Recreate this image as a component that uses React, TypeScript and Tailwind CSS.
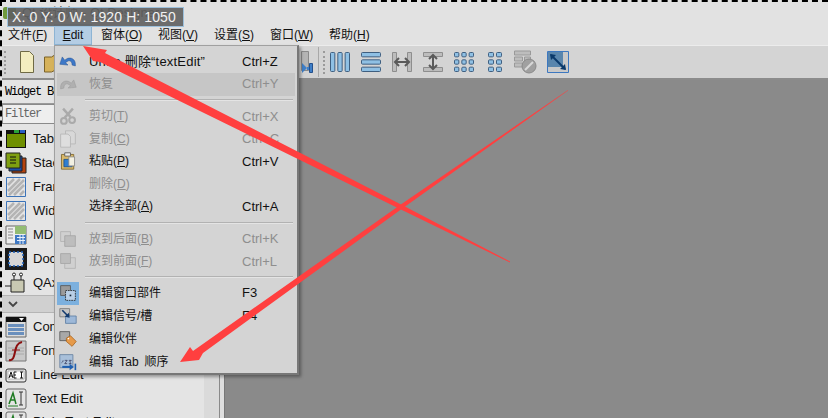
import type { ReactNode } from "react";

const sans = "font-['Liberation_Sans','Noto_Sans_CJK_SC',sans-serif]";
const mono = "font-['Liberation_Mono',monospace] tracking-[-1.2px]";

// --- small icon drawings ---
function Svg({ size = 22, children }: { size?: number; children: ReactNode }) {
  return (
    <svg width={size} height={size} viewBox="0 0 22 22" className="shrink-0">
      {children}
    </svg>
  );
}

const Stripes = () => (
  <g stroke="#b4b4b4" strokeWidth="2.5">
    <path d="M3 9 9 3M3 15 15 3M4 19 19 4M9 19 19 9M15 19l4-4" />
  </g>
);

const sideIcons: Record<string, ReactNode> = {
  tab: (
    <Svg>
      <path d="M1 2h20v18H1z" fill="#111" />
      <path d="M2 6h18v13H2z" fill="#6f8f00" />
      <path d="M9 2h5v3H9z" fill="#2aa13a" />
      <path d="M15 2h5v3h-5z" fill="#2a5fc4" />
    </Svg>
  ),
  stack: (
    <Svg>
      <path d="M7 6h14v15H7z" fill="#b5430f" stroke="#222" />
      <path d="M4 4h13v15H4z" fill="#1d4fa8" stroke="#222" />
      <path d="M1 1h14v15H1z" fill="#7f9f10" stroke="#222" />
      <path d="M5 5h6M5 8h6M5 11h6" stroke="#111" />
    </Svg>
  ),
  frame: (
    <Svg>
      <path d="M1.5 1.5h19v19h-19z" fill="#e4e4e4" stroke="#3b73b8" />
      <Stripes />
    </Svg>
  ),
  mdi: (
    <Svg>
      <path d="M1 2h20v18H1z" fill="#eee" stroke="#666" />
      <path d="M10 2h11v8H10z" fill="#93bc73" />
      <path d="M10 11h11v9H10z" fill="#3f79c4" />
      <path d="M3 5h5M3 8h5M3 11h5M3 14h5" stroke="#888" />
      <path d="M12 13.500h8M12 16.500h8M15 11v9M18 11v9" stroke="#e8f0fa" />
    </Svg>
  ),
  dock: (
    <Svg>
      <path d="M0 0h22v22H0z" fill="#1a1a1a" />
      <path d="M4 4h14v14H4z" fill="#d6d6d6" />
      <path d="M4 4h14v14H4z" fill="none" stroke="#1d5fb8" strokeWidth="1.500" strokeDasharray="2 2" />
    </Svg>
  ),
  qax: (
    <Svg>
      <path d="M6 8h13v12H6z" fill="#c9c9b2" stroke="#222" />
      <path d="M0 14h6M9 8V3M16 8V3" stroke="#222" />
      <circle cx="9" cy="2.500" r="1.500" fill="#fff" stroke="#222" />
      <circle cx="16" cy="2.500" r="1.500" fill="#fff" stroke="#222" />
    </Svg>
  ),
  combo: (
    <Svg>
      <path d="M1 1h20v20H1z" fill="#dcdcdc" stroke="#666" />
      <path d="M1 1h20v5H1z" fill="#111" />
      <path d="m14 2 5 0-2.500 3z" fill="#fff" />
      <path d="M3 8h16v3H3zM3 12h16v3H3zM3 16h16v3H3z" fill="#6a8fbd" />
    </Svg>
  ),
  font: (
    <Svg>
      <path d="M1 1h20v20H1z" fill="#c9c9c9" stroke="#777" />
      <path d="M3 8h16M3 11h16M3 14h16" stroke="#aaa" />
      <path d="M4 20c4 1 5-3 6-8s2-9 7-10" fill="none" stroke="#8c0f0f" strokeWidth="2" />
      <path d="M7 10h8" stroke="#8c0f0f" />
    </Svg>
  ),
  line: (
    <Svg>
      <rect x="1" y="5" width="20" height="13" rx="2" fill="#e8e8e8" stroke="#333" />
      <path d="M3 7h16v8H3z" fill="#fff" stroke="#777" strokeWidth=".5" />
      <path d="M4 14l2-6 2 6M5 12h2M9 8v6h2.500M9 11h2M9 8h2.500M15 8h3M15 14h3M16.500 8v6" fill="none" stroke="#111" />
    </Svg>
  ),
  text: (
    <Svg>
      <rect x="1" y="1" width="20" height="20" rx="2" fill="#e4e4e4" stroke="#666" />
      <path d="M4 16 8 5l3 11M5.500 12h4" fill="none" stroke="#1e7a22" strokeWidth="1.500" />
      <path d="M3 18h10" stroke="#1e7a22" />
      <path d="M14 4h4M14 17h4M16 4v13" stroke="#333" />
    </Svg>
  ),
};

const menuIcons: Record<string, ReactNode> = {
  undo: (
    <Svg size={18}>
      <path d="M20 15c0-6-5-9-10-7L7 10 4 6l-3 9 10 1-3-3 3-2c3-1 5 1 5 5l4 1z" fill="#3d78c8" stroke="#26508f" strokeWidth=".6" />
    </Svg>
  ),
  redo: (
    <Svg size={18}>
      <path d="M2 15c0-6 5-9 10-7l3 2 3-4 3 9-10 1 3-3-3-2c-3-1-5 1-5 5l-4 1z" fill="#b0b0b0" stroke="#999" strokeWidth=".6" />
    </Svg>
  ),
  cut: (
    <Svg size={18}>
      <path d="M5 2l9 10M17 2 7 13" stroke="#aaa" strokeWidth="3" />
      <circle cx="6" cy="17" r="3.500" fill="none" stroke="#aaa" strokeWidth="2.500" />
      <circle cx="16" cy="16" r="3.500" fill="none" stroke="#aaa" strokeWidth="2.500" />
    </Svg>
  ),
  copy: (
    <Svg size={18}>
      <path d="M8 1h9l3 3v13H8z" fill="#d8d8d8" stroke="#b4b4b4" />
      <path d="M2 5h9l3 3v13H2z" fill="#dedede" stroke="#b4b4b4" />
    </Svg>
  ),
  paste: (
    <Svg size={18}>
      <path d="M3 3h15v18H3z" fill="#d9b96a" stroke="#7d6428" />
      <path d="M7 1h7v4H7z" fill="#eee" stroke="#555" />
      <path d="M6 9h10v9H6z" fill="#2f7ed0" stroke="#1b4e8c" />
      <path d="M12 6h7v11h-7z" fill="#f2f0e2" stroke="#888" />
    </Svg>
  ),
  back: (
    <Svg size={18}>
      <path d="M2 2h12v12H2z" fill="#d0d0d0" stroke="#b0b0b0" />
      <path d="M7 7h13v13H7z" fill="#bdbdbd" stroke="#a4a4a4" />
    </Svg>
  ),
  front: (
    <Svg size={18}>
      <path d="M7 7h13v13H7z" fill="#d0d0d0" stroke="#b0b0b0" />
      <path d="M2 2h12v12H2z" fill="#bdbdbd" stroke="#a4a4a4" />
    </Svg>
  ),
  widget: (
    <Svg size={18}>
      <path d="M2 2h12v12H2z" fill="#9a9a9a" stroke="#555" />
      <path d="M8 8h12v12H8z" fill="#b9cfe6" stroke="#222" strokeDasharray="2 1" />
      <path d="M13 13h2v2h-2z" fill="#123" />
    </Svg>
  ),
  signal: (
    <Svg size={18}>
      <path d="M1 2h12v10H1z" fill="#c4c4c4" stroke="#777" />
      <path d="M8 11h13v9H8z" fill="#9db8d8" stroke="#5c7da3" />
      <path d="M4 4l7 7" stroke="#123a6e" strokeWidth="2" />
      <path d="m13 13-6-1 5-5z" fill="#123a6e" />
    </Svg>
  ),
  buddy: (
    <Svg size={18}>
      <path d="M1 2h12v11H1z" fill="#a8a8a8" stroke="#555" />
      <path d="m9 10 5-3 7 7-5 6-7-6z" fill="#e69a4a" stroke="#a8641f" />
      <circle cx="11.500" cy="10.500" r="1" fill="#fff" />
    </Svg>
  ),
  order: (
    <Svg size={18}>
      <path d="M1 2h16v16H1z" fill="#a9c0da" stroke="#64809f" />
      <path d="M3 12c1-1 2-1 2-3M7 9h3l-3 4h3M12 9h3l-2 2 2 2h-3" fill="none" stroke="#224" strokeWidth=".8" />
      <path d="M4 17h10" stroke="#1f5fb0" strokeWidth="2.500" />
      <path d="m13 13 5 4-5 4z" fill="#1f5fb0" />
      <path d="M20 13v8" stroke="#1f5fb0" strokeWidth="2" />
    </Svg>
  ),
};

const Bars = ({ rows, cols, w, h }: { rows: number; cols: number; w: number; h: number }) => (
  <svg width={w} height={h} viewBox={`0 0 ${w} ${h}`} className="shrink-0">
    {Array.from({ length: rows * cols }).map((_, i) => {
      const cw = (w - (cols - 1) * 2) / cols;
      const ch = (h - (rows - 1) * 2) / rows;
      return (
        <rect
          key={i}
          x={(i % cols) * (cw + 2) + 0.5}
          y={Math.floor(i / cols) * (ch + 2) + 0.5}
          width={cw - 1}
          height={ch - 1}
          rx="1"
          fill="#8fc0e4"
          stroke="#3f5f80"
        />
      );
    })}
  </svg>
);

function Mnemonic({ text, letter }: { text: string; letter: string }) {
  return (
    <>
      {text}(<span className="underline">{letter}</span>)
    </>
  );
}

type Row =
  | { sep: true; h: string }
  | { icon?: string; text: string; key?: string; shortcut?: string; off?: boolean; hover?: boolean; active?: boolean; h: string; cls?: string };

const menuRows: Row[] = [
  { icon: "undo", text: "Undo 删除“textEdit”", shortcut: "Ctrl+Z", h: "h-[22.5px]", cls: "text-[13px] tracking-[0.2px]" },
  { icon: "redo", text: "恢复", shortcut: "Ctrl+Y", off: true, hover: true, h: "h-[23px]" },
  { sep: true, h: "h-[9.5px]" },
  { icon: "cut", text: "剪切", key: "T", shortcut: "Ctrl+X", off: true, h: "h-[22.5px]" },
  { icon: "copy", text: "复制", key: "C", shortcut: "Ctrl+C", off: true, h: "h-[22.5px]" },
  { icon: "paste", text: "粘贴", key: "P", shortcut: "Ctrl+V", h: "h-[22.5px]" },
  { text: "删除", key: "D", off: true, h: "h-[22.5px]" },
  { text: "选择全部", key: "A", shortcut: "Ctrl+A", h: "h-[22.5px]" },
  { sep: true, h: "h-[10px]" },
  { icon: "back", text: "放到后面", key: "B", shortcut: "Ctrl+K", off: true, h: "h-[22.5px]" },
  { icon: "front", text: "放到前面", key: "F", shortcut: "Ctrl+L", off: true, h: "h-[22.5px]" },
  { sep: true, h: "h-[9px]" },
  { icon: "widget", text: "编辑窗口部件", shortcut: "F3", active: true, h: "h-[23px]" },
  { icon: "signal", text: "编辑信号/槽", shortcut: "F4", h: "h-[23px]" },
  { icon: "buddy", text: "编辑伙伴", h: "h-[23px]" },
  { icon: "order", text: "编辑 Tab 顺序", h: "h-[23px]", cls: "[word-spacing:2px] tracking-[0.2px]" },
];

const topWidgets = [
  { icon: sideIcons.tab, label: "Tab", h: "h-[23px]" },
  { icon: sideIcons.stack, label: "Stac", h: "h-[25px]" },
  { icon: sideIcons.frame, label: "Fram", h: "h-[24px]" },
  { icon: sideIcons.frame, label: "Wid", h: "h-[24px]" },
  { icon: sideIcons.mdi, label: "MDI", h: "h-[24px]" },
  { icon: sideIcons.dock, label: "Doc", h: "h-[24px]" },
  { icon: sideIcons.qax, label: "QAx", h: "h-[24px]" },
];

const inputWidgets = [
  { icon: sideIcons.combo, label: "Combo Box", h: "h-[24px]" },
  { icon: sideIcons.font, label: "Font Combo Box", h: "h-[24px]" },
  { icon: sideIcons.line, label: "Line Edit", h: "h-[24px]" },
  { icon: sideIcons.text, label: "Text Edit", h: "h-[23px]" },
  { icon: sideIcons.text, label: "Plain Text Edit", h: "h-[24px]" },
];

const MENU_LABELS = [
  { node: <Mnemonic text="文件" letter="F" />, cls: "w-[46px] ml-[6px]" },
  {
    node: (
      <>
        <span className="underline">E</span>dit
      </>
    ),
    cls: "w-[38px] h-[21px] justify-center bg-[#b4cde4] border border-[#8db4d4]",
  },
  { node: <Mnemonic text="窗体" letter="O" />, cls: "w-[57px] ml-[9px]" },
  { node: <Mnemonic text="视图" letter="V" />, cls: "w-[56px]" },
  { node: <Mnemonic text="设置" letter="S" />, cls: "w-[56px]" },
  { node: <Mnemonic text="窗口" letter="W" />, cls: "w-[59px]" },
  { node: <Mnemonic text="帮助" letter="H" />, cls: "w-[50px]" },
];

function ToolbarGrip() {
  return <div className="w-[2px] h-[23px] shrink-0 border-l-2 border-dotted border-[#9a9a9a]" />;
}

export default function App() {
  return (
    <div className={`relative w-[828px] h-[418px] overflow-hidden bg-white text-[12px] text-[#111] ${sans}`}>
      <div className="relative flex flex-col h-full border-t-2 border-l-2 border-dashed border-black bg-[#e2e2e2]">
        {/* title bar */}
        <div className="h-[22px] shrink-0 flex items-center pl-[1px] gap-[6px]">
          <div className="w-[13px] h-[12px] rounded-[2px] bg-[#6f9a3c]" />
          <span className="text-[13px] text-[#333]">Qt 设计师 - Qt Designer</span>
        </div>

        {/* menu bar */}
        <div className="h-[21px] shrink-0 flex items-center">
          {MENU_LABELS.map((m, i) => (
            <div key={i} className={`flex items-center shrink-0 ${m.cls}`}>
              {m.node}
            </div>
          ))}
        </div>

        {/* toolbar */}
        <div className="h-[35px] shrink-0 flex items-center bg-[#d4d4d4] border-t border-[#ececec] border-b-2 border-b-[#8c8c8c]">
          <div className="ml-[2px] w-[16px] shrink-0">
            <ToolbarGrip />
          </div>
          <svg width="14" height="23" viewBox="0 0 14 23" className="shrink-0">
            <path d="M.5.500h9l4 4v17H.5z" fill="#f3edbf" stroke="#6f6a45" />
          </svg>
          <svg width="16" height="22" viewBox="0 0 16 22" className="ml-[10px] shrink-0">
            <path d="M.5 6h7l8-5v16l-8 4H.5z" fill="#d6b25a" stroke="#7b6228" />
          </svg>
          <svg width="12" height="23" viewBox="0 0 12 23" className="ml-[241px] shrink-0">
            <path d="M.5.500h7v19h-7z" fill="#b4b4b4" stroke="#8a8a8a" />
            <path d="M1 12l5 5-5 5z" fill="#3f7fc8" />
            <path d="M6 16h2v3H6z" fill="#3f7fc8" />
            <path d="M8.500 12.500h3v9h-3z" fill="#3f7fc8" stroke="#24508c" />
          </svg>
          <div className="ml-[5px] w-[1px] h-[30px] bg-[#a8a8a8] shrink-0" />
          <div className="ml-[4px] shrink-0">
            <ToolbarGrip />
          </div>
          <div className="ml-[5px] flex items-center gap-[11px]">
            <Bars rows={1} cols={3} w={20} h={20} />
            <Bars rows={3} cols={1} w={20} h={20} />
            <svg width="20" height="20" viewBox="0 0 20 20" className="shrink-0">
              <path d="M.5.500h4v19h-4zM15.500.500h4v19h-4z" fill="#bdbdbd" stroke="#8e8e8e" />
              <path d="M3 10h14M7 6l-4 4 4 4M13 6l4 4-4 4" fill="none" stroke="#5a5a5a" strokeWidth="2" />
            </svg>
            <svg width="20" height="20" viewBox="0 0 20 20" className="shrink-0">
              <path d="M.5.500h19v4H.5zM.5 15.500h19v4H.5z" fill="#bdbdbd" stroke="#8e8e8e" />
              <path d="M10 3v14M6 7l4-4 4 4M6 13l4 4 4-4" fill="none" stroke="#5a5a5a" strokeWidth="2" />
            </svg>
            <Bars rows={3} cols={3} w={20} h={20} />
          </div>
          <div className="ml-[14px] shrink-0">
            <Bars rows={3} cols={2} w={14} h={20} />
          </div>
          <svg width="23" height="24" viewBox="0 0 23 24" className="ml-[12px] shrink-0">
            <path d="M.5 1h16v4H.5zM.5 7h8v4h-8zM10.500 7h6v4h-6zM.5 13h8v4h-8z" fill="#bdbdbd" stroke="#999" />
            <circle cx="15" cy="16" r="7" fill="#a0a0a0" stroke="#8a8a8a" />
            <path d="m11 20 8-8" stroke="#d8d8d8" strokeWidth="2" />
          </svg>
          <svg width="22" height="22" viewBox="0 0 22 22" className="ml-[10px] shrink-0">
            <path d="M.5.500h21v21H.5z" fill="#c9c9c9" stroke="#3d78c0" />
            <path d="M1 1h15v15H1z" fill="#5a86ad" />
            <path d="M4 4l14 14" stroke="#0b3a6b" strokeWidth="2" />
            <path d="m3 3 6 1-5 5zM19 19l-6-1 5-5z" fill="#0b3a6b" />
          </svg>
        </div>

        {/* body */}
        <div className="flex flex-1 min-h-0">
          <div className="w-[202px] shrink-0 bg-[#e4e4e4] overflow-hidden">
            <div className={`h-[24px] flex items-center pl-[3px] text-[12px] text-black border-b border-[#9a9a9a] ${mono}`}>
              Widget Box
            </div>
            <div className="h-[23px] flex items-start">
              <div className={`w-[80px] h-[20px] flex items-center pl-[2px] bg-[#eeeeee] border border-[#8a8a8a] text-[#666] ${mono}`}>
                Filter
              </div>
            </div>
            {topWidgets.map((w) => (
              <div key={w.label} className={`flex items-center pl-[3px] gap-[6px] text-[13px] ${w.h}`}>
                {w.icon}
                <span>{w.label}</span>
              </div>
            ))}
            <div className="h-[18px] flex items-center pl-[6px] bg-[#d0d0d0] border-y border-[#b5b5b5]">
              <svg width="10" height="8" viewBox="0 0 10 8">
                <path d="m1 2 4 4 4-4" fill="none" stroke="#444" strokeWidth="1.800" />
              </svg>
            </div>
            <div className="pt-[2px]">
              {inputWidgets.map((w) => (
                <div key={w.label} className={`flex items-center pl-[3px] gap-[6px] text-[13px] ${w.h}`}>
                  {w.icon}
                  <span>{w.label}</span>
                </div>
              ))}
            </div>
          </div>
          <div className="w-[16px] shrink-0 bg-[#dadada] border-r border-[#8a8a8a]" />
          <div className="w-[5px] shrink-0 bg-[#dedede] border-r border-[#777]" />
          <div className="flex-1 bg-[#8a8a8a]" />
        </div>
      </div>

      {/* geometry tooltip over the title bar */}
      <div className="absolute left-[7px] top-[7px] w-[177px] h-[20px] flex items-center pl-[4px] bg-[#5f5f5f]/90 border border-[#9cc0dc] text-[14px] text-[#f2f2f2] tracking-[0.1px] leading-none whitespace-nowrap">
        X: 0 Y: 0 W: 1920 H: 1050
      </div>

      {/* open Edit menu */}
      <div className="absolute left-[54px] top-[45px] w-[245px] h-[330px] pt-[4px] px-[2px] bg-[#d4d4d4] border border-[#a0a0a0] border-r-2 border-b-2 border-r-[#777] border-b-[#777] shadow-[2px_2px_3px_rgba(0,0,0,0.35)]">
        {menuRows.map((row, i) =>
          "sep" in row ? (
            <div key={i} className={`flex items-center pl-[28px] pr-[2px] ${row.h}`}>
              <div className="w-full h-[1px] bg-[#b2b2b2] border-b border-[#e4e4e4] box-content" />
            </div>
          ) : (
            <div
              key={i}
              className={`flex items-center whitespace-nowrap ${row.h} ${row.hover ? "bg-[#c6c6c6]" : ""} ${row.off ? "text-[#8e8e8e]" : "text-[#111]"}`}
            >
              <div className={`w-[22px] h-full flex items-center justify-center shrink-0 ${row.active ? "bg-[#7cb0de]" : ""}`}>
                {row.icon ? menuIcons[row.icon] : null}
              </div>
              <span className={`ml-[10px] w-[153px] shrink-0 ${row.cls ?? ""}`}>
                {row.key ? <Mnemonic text={row.text} letter={row.key} /> : row.text}
              </span>
              <span className="text-[13px]">{row.shortcut}</span>
            </div>
          ),
        )}
      </div>

      {/* red annotation arrows drawn on the screenshot */}
      <svg width="828" height="418" viewBox="0 0 828 418" className="absolute left-0 top-0 pointer-events-none">
        <path d="M83 46 107 50 105 53 403 205.500 510 261.500 510 262.500 403 210.500 100 62 93 61z" fill="#ff3f3f" />
        <path d="M180 362 190 347 193 351 403 203 568 90 568 90.500 403 208 203 353 199 360z" fill="#ff3f3f" />
      </svg>
    </div>
  );
}
